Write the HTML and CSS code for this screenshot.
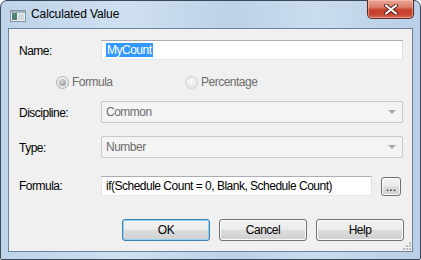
FILE: index.html
```html
<!DOCTYPE html>
<html lang="en">
<head>
    <meta charset="UTF-8">
    <title>Calculated Value</title>
    <link rel="stylesheet" href="styles.css">
</head>
<body>
    <div class="window">
        <div class="titlebar">
            <svg class="app-icon" width="16" height="12" viewBox="0 0 16 12">
                <rect x="0.5" y="0.5" width="15" height="11" fill="#e8ecef" stroke="#8a949c"/>
                <rect x="1" y="1" width="14" height="2" fill="#9fb4c2"/>
                <rect x="2" y="3" width="5" height="7" fill="#4f8476"/>
                <rect x="8" y="4" width="6" height="6" fill="#d3d9dd"/>
            </svg>
            <span class="title">Calculated Value</span>
            <button class="close-btn">
                <svg width="14" height="11" viewBox="0 0 14 11">
                    <path d="M2 1.5 L12 9.5 M12 1.5 L2 9.5" stroke="#5a2018" stroke-width="4" stroke-linecap="round"/>
                    <path d="M2 1.5 L12 9.5 M12 1.5 L2 9.5" stroke="#fff" stroke-width="2.2" stroke-linecap="round"/>
                </svg>
            </button>
        </div>
        <div class="client">
            <div class="field-row name-row">
                <label class="field-label">Name:</label>
                <div class="textbox"><span class="selected">MyCount</span></div>
            </div>
            <div class="radio-row">
                <div class="radio-item">
                    <span class="radio checked"></span>
                    <span>Formula</span>
                </div>
                <div class="radio-item">
                    <span class="radio"></span>
                    <span>Percentage</span>
                </div>
            </div>
            <div class="field-row discipline-row">
                <label class="field-label">Discipline:</label>
                <div class="combo">
                    <span>Common</span>
                    <span class="combo-arrow"></span>
                </div>
            </div>
            <div class="field-row type-row">
                <label class="field-label">Type:</label>
                <div class="combo">
                    <span>Number</span>
                    <span class="combo-arrow"></span>
                </div>
            </div>
            <div class="field-row formula-row">
                <label class="field-label">Formula:</label>
                <div class="textbox formula-box">if(Schedule Count = 0, Blank, Schedule Count)</div>
                <button class="btn dots-btn">...</button>
            </div>
            <div class="actions">
                <button class="btn default">OK</button>
                <button class="btn">Cancel</button>
                <button class="btn">Help</button>
            </div>
            <svg class="grip" width="9" height="9" viewBox="0 0 9 9">
                <g fill="#b8bcc0">
                    <rect x="7" y="1" width="2" height="2"/>
                    <rect x="4" y="4" width="2" height="2"/>
                    <rect x="7" y="4" width="2" height="2"/>
                    <rect x="1" y="7" width="2" height="2"/>
                    <rect x="4" y="7" width="2" height="2"/>
                    <rect x="7" y="7" width="2" height="2"/>
                </g>
            </svg>
        </div>
    </div>
</body>
</html>
```

FILE: styles.css
```css
body {
    margin: 0;
    background-color: #ffffff;
    font-family: 'Segoe UI', 'Liberation Sans', sans-serif;
    font-size: 12px;
    color: #000;
}
.window {
    box-sizing: border-box;
    width: 421px;
    height: 260px;
    border: 1px solid #3d4754;
    border-radius: 7px 7px 2px 2px;
    background: linear-gradient(to right, #bed4ea 0%, #cfe0f1 30%, #bcd2e9 55%, #cadcef 75%, #b8cfe7 100%);
    padding: 0 7px 7px 7px;
    display: flex;
    flex-direction: column;
}
.titlebar {
    height: 27px;
    display: flex;
    align-items: flex-start;
}
.app-icon {
    margin: 9px 0 0 2px;
}
.title {
    margin: 6px 0 0 5px;
    font-size: 12px;
    letter-spacing: -0.1px;
    color: #000;
}
.close-btn {
    margin-left: auto;
    margin-right: -1px;
    margin-top: -1px;
    width: 47px;
    height: 19px;
    border: 1px solid #5c2a23;
    border-top: none;
    border-radius: 0 0 5px 5px;
    background: linear-gradient(#e9a897 0%, #dc7c69 40%, #c4402b 55%, #c8452f 80%, #d86b55 100%);
    box-shadow: inset 0 0 0 1px rgba(255, 210, 200, 0.5);
    padding: 0;
    display: flex;
    align-items: center;
    justify-content: center;
}
.client {
    position: relative;
    flex: 1;
    border: 1px solid #6f8296;
    background-color: #f0f0f0;
    padding: 11px 0 0 10px;
    letter-spacing: -0.5px;
}
.field-row {
    display: flex;
    align-items: center;
}
.field-label {
    width: 82px;
    padding-top: 1px;
}
.textbox {
    box-sizing: border-box;
    width: 302px;
    height: 20px;
    border: 1px solid;
    border-color: #abadb3 #dbdfe6 #e3e9ef #e2e3ea;
    background-color: #fff;
    padding: 1px 0 0 4px;
    line-height: 16px;
}
.selected {
    background-color: #3399ff;
    color: #fff;
    padding: 0 1px;
}
.radio-row {
    display: flex;
    margin-top: 13px;
    padding-left: 37px;
    height: 18px;
    align-items: center;
    color: #6d6d6d;
}
.radio-item {
    display: flex;
    align-items: center;
    width: 129px;
}
.radio {
    box-sizing: border-box;
    width: 13px;
    height: 13px;
    border: 1px solid #b1b1b1;
    border-radius: 50%;
    background: radial-gradient(circle at 50% 40%, #fafafa, #e0e0e0);
    margin-right: 3px;
    position: relative;
}
.radio.checked::after {
    content: '';
    position: absolute;
    left: 2px;
    top: 2px;
    width: 7px;
    height: 7px;
    border-radius: 50%;
    background: radial-gradient(circle at 40% 35%, #d8d8d8, #8c8c8c);
}
.radio-item + .radio-item .radio {
    border-color: #d0d0d0;
}
.combo {
    box-sizing: border-box;
    width: 302px;
    height: 22px;
    border: 1px solid #cacaca;
    border-radius: 2px;
    background-color: #f4f4f4;
    color: #6d6d6d;
    display: flex;
    align-items: center;
    padding-left: 4px;
}
.combo-arrow {
    margin-left: auto;
    margin-right: 6px;
    width: 0;
    height: 0;
    border-left: 4px solid transparent;
    border-right: 4px solid transparent;
    border-top: 4px solid #a9a9a9;
}
.discipline-row {
    margin-top: 10px;
}
.type-row {
    margin-top: 13px;
}
.formula-row {
    margin-top: 17px;
}
.formula-box {
    width: 271px;
}
.btn {
    box-sizing: border-box;
    height: 22px;
    border: 1px solid #707070;
    border-radius: 3px;
    background: linear-gradient(#f2f2f2 0%, #ebebeb 48%, #dddddd 52%, #cfcfcf 100%);
    box-shadow: inset 0 0 0 1px #fcfcfc;
    font-family: 'Segoe UI', 'Liberation Sans', sans-serif;
    font-size: 12px;
    letter-spacing: -0.5px;
    color: #000;
    padding: 0;
}
.dots-btn {
    width: 20px;
    height: 19px;
    margin-left: 9px;
    margin-top: 2px;
    line-height: 12px;
    letter-spacing: 0;
}
.actions {
    display: flex;
    gap: 9px;
    margin-top: 23px;
    padding-left: 103px;
}
.actions .btn {
    width: 88px;
}
.btn.default {
    border-color: #3c7fb1;
    box-shadow: inset 0 0 0 1px #8fd3f5;
}
.grip {
    position: absolute;
    right: 1px;
    bottom: 1px;
}
```
